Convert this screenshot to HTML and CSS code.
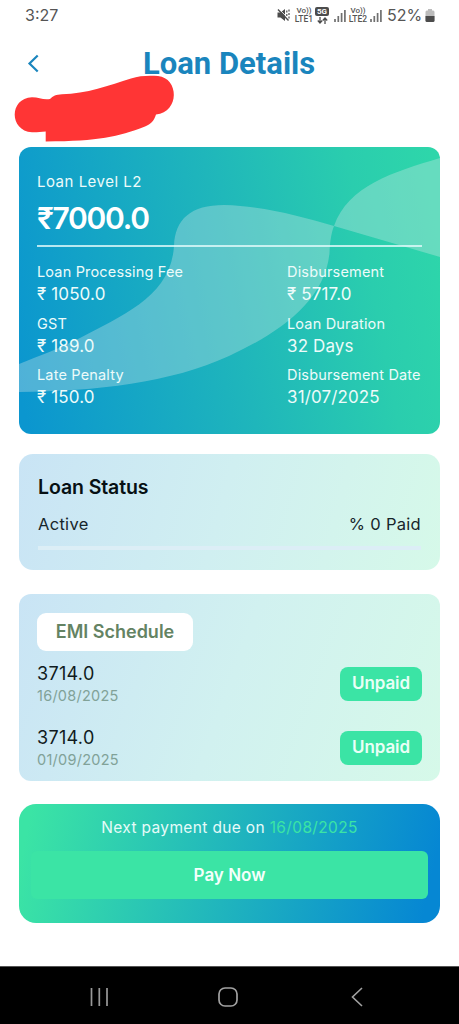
FILE: index.html
```html
<!DOCTYPE html>
<html lang="en">
<head>
<meta charset="utf-8">
<meta name="viewport" content="width=device-width, initial-scale=1">
<title>Loan Details</title>
<link rel="stylesheet" href="styles.css">
</head>
<body>
<div class="screen">
  <div class="statusbar">
    <span class="clock">3:27</span>
    <div class="indicators">
      <svg class="mute" width="13" height="14" viewBox="0 0 13 14"><path d="M.5 4.500h3L8 1v12L3.500 9.500h-3z" fill="#4c4c4c"/><path d="M2.200 1.300 12 11.300" stroke="#fff" stroke-width="1"/><path d="M1 1.500 11.500 12.500" stroke="#4c4c4c" stroke-width="1.400"/><path d="M9.800 2.500v2M9.800 6v2M12 1.500v2M12 5v2M12 8.500v2" stroke="#4c4c4c" stroke-width="1.200"/></svg>
      <span class="volte volte-1"><span>Vo))</span><span class="lte">LTE1</span></span>
      <span class="net"><span class="net-badge">5G</span><svg width="11" height="7" viewBox="0 0 11 7"><path d="M3 0v5.500M.8 3.500 3 6l2.200-2.500M8 7V1.300M5.800 3.500 8 1l2.200 2.500" fill="none" stroke="#4c4c4c" stroke-width="1.300"/></svg></span>
      <svg class="signal-1" width="12" height="13" viewBox="0 0 12 13"><path d="M1 10v3M4.300 7v6M7.600 4v9M10.900 1v12" stroke="#707070" stroke-width="1.700"/></svg>
      <span class="volte volte-2"><span>Vo))</span><span class="lte">LTE2</span></span>
      <svg class="signal-2" width="12" height="13" viewBox="0 0 12 13"><path d="M1 10v3M4.300 7v6M7.600 4v9M10.900 1v12" stroke="#707070" stroke-width="1.700"/></svg>
      <span class="percent">52%</span>
      <svg class="battery" width="10" height="13" viewBox="0 0 10 13"><path d="M3 0h4v1.500h1.200Q9.500 1.500 9.500 3v8.500Q9.500 13 8 13H2Q.5 13 .5 11.500V3Q.5 1.500 1.800 1.500H3z" fill="#bcbcbc"/><path d="M.5 7h9v4.500Q9.500 13 8 13H2Q.5 13 .5 11.500z" fill="#4c4c4c"/></svg>
    </div>
  </div>

  <header class="header">
    <svg class="back" width="12" height="19" viewBox="0 0 12 19"><path d="M10.700 1.500 2.500 9.500l8.200 8" fill="none" stroke="#1a85bd" stroke-width="2.200"/></svg>
    <h1 class="title">Loan Details</h1>
    <svg class="scribble" width="180" height="70" viewBox="0 75 180 70"><path d="M45.700 141.500V131.500C41 131.600 37 132.500 32 132.300 9 131 9 98 32 97.300 39 97.500 43 100 50 99 53 96 56 94.500 62 94.300 86 94 110 85 131 78.500 140 75.500 149 75.500 158 76 179 78 180 112 156 114.500 154 121 151 124 145 126.500 117 137 100 141 45.700 141.500z" fill="#ff3535"/></svg>
  </header>

  <main class="content">
    <section class="card loan">
      <svg class="waves" width="421" height="287" viewBox="0 0 421 287"><path d="M0 217C22 208 42 201 61 191 104 168 152 149 155 99 156 72 172 58 205 58 245 59 281 69 315 79 312 87 311 95 310.500 106 306 155 258 187 210 209 151 236 78 244 0 245zM315 79C329 39 374 25 421 11V110z" fill="#dceaeb" fill-opacity=".33"/></svg>
      <div class="level">Loan Level L2</div>
      <div class="amount">₹7000.0</div>
      <div class="facts">
        <div class="fact-col">
          <div class="fact"><span class="label">Loan Processing Fee</span><span class="value">₹ 1050.0</span></div>
          <div class="fact"><span class="label">GST</span><span class="value">₹ 189.0</span></div>
          <div class="fact"><span class="label">Late Penalty</span><span class="value">₹ 150.0</span></div>
        </div>
        <div class="fact-col right">
          <div class="fact"><span class="label">Disbursement</span><span class="value">₹ 5717.0</span></div>
          <div class="fact"><span class="label">Loan Duration</span><span class="value">32 Days</span></div>
          <div class="fact"><span class="label">Disbursement Date</span><span class="value">31/07/2025</span></div>
        </div>
      </div>
    </section>

    <section class="card status">
      <h2 class="status-title">Loan Status</h2>
      <div class="status-row"><span>Active</span><span>% 0 Paid</span></div>
      <div class="progress"></div>
    </section>

    <section class="card schedule">
      <h2 class="schedule-title">EMI Schedule</h2>
      <div class="emi"><div class="emi-info"><span class="emi-amount">3714.0</span><span class="emi-date">16/08/2025</span></div><span class="badge">Unpaid</span></div>
      <div class="emi"><div class="emi-info"><span class="emi-amount">3714.0</span><span class="emi-date">01/09/2025</span></div><span class="badge">Unpaid</span></div>
    </section>

    <section class="card pay">
      <p class="due">Next payment due on <span class="due-date">16/08/2025</span></p>
      <button class="pay-button">Pay Now</button>
    </section>
  </main>

  <nav class="navbar">
    <svg width="18" height="20" viewBox="0 0 18 20"><path d="M1.500 1v18M9.300 1v18M17 1v18" stroke="#999" stroke-width="1.700"/></svg>
    <svg class="home" width="20" height="20" viewBox="0 0 20 20"><rect x="1" y="1" width="18" height="18" rx="6" fill="none" stroke="#a2a2a2" stroke-width="1.700"/></svg>
    <svg width="12" height="20" viewBox="0 0 12 20"><path d="M11 1 1.500 10l9.500 9" fill="none" stroke="#a2a2a2" stroke-width="1.600"/></svg>
  </nav>
</div>
</body>
</html>
```
FILE: styles.css
```css
* { box-sizing: border-box; }
body { margin: 0; background: #fff; font-family: Inter, "Liberation Sans", sans-serif; }
h1, h2, p { margin: 0; }
svg { display: block; flex: none; }

.screen { width: 459px; height: 1024px; display: flex; flex-direction: column; overflow: hidden; }

.statusbar { height: 30px; padding: 0 24px 0 25px; display: flex; justify-content: space-between; align-items: center; color: #555; font-size: 16px; }
.clock { letter-spacing: 0; }
.indicators { display: flex; align-items: center; }
.volte { display: flex; flex-direction: column; align-items: center; width: 18px; font: 500 8px/8px Roboto, sans-serif; color: #555; }
.lte { font-size: 8.500px; }
.volte-1 { margin-left: 5px; }
.volte-2 { margin-left: 3px; }
.net { display: flex; flex-direction: column; align-items: center; gap: 1px; margin-left: 2px; }
.net-badge { width: 14px; height: 9px; border-radius: 2px; background: #4c4c4c; color: #fff; font: 700 8px/9px Roboto, sans-serif; text-align: center; }
.signal-1 { margin-left: 5px; }
.signal-2 { margin-left: 3px; }
.percent { margin-left: 5px; width: 37px; }
.battery { margin-left: 1px; }

.header { position: relative; height: 117px; padding: 14px 0 0 27px; display: flex; align-items: flex-start; }
.back { margin-top: 10px; }
.title { margin: 1px 0 0 104px; font: 700 31px/38px Roboto, sans-serif; color: #1a85bd; white-space: nowrap; }
.scribble { position: absolute; left: 0; top: 45px; }

.content { flex: 1; padding: 0 19px; }
.card { width: 421px; }

.loan { position: relative; height: 287px; padding: 24px 18px 0; border-radius: 12px; overflow: hidden; color: #edfbfa; background: linear-gradient(79deg, #0b96cf 2%, #1fb6bb 50%, #2acdae 80%, #2ed6aa 98%); }
.waves { position: absolute; left: 0; top: 0; }
.level, .amount, .facts { position: relative; }
.level { font-size: 15px; line-height: 22px; letter-spacing: .5px; }
.amount { height: 54px; padding-top: 7px; border-bottom: 2px solid rgba(225, 250, 250, .8); font-size: 30px; line-height: 36px; font-weight: 600; letter-spacing: -1.300px; color: #fff; }
.facts { display: flex; justify-content: space-between; padding-top: 14px; }
.fact-col { display: flex; flex-direction: column; gap: 7.500px; }
.fact-col.right { width: 135px; }
.fact { display: flex; flex-direction: column; white-space: nowrap; }
.label { font-size: 14.500px; line-height: 22px; letter-spacing: .17px; }
.value { font-size: 17px; line-height: 22px; letter-spacing: .13px; }

.status { height: 116px; margin-top: 20px; padding: 20px 19px 0; border-radius: 14px; background: linear-gradient(105deg, #c9e4f5, #d0eff1 48%, #d6f9e9); color: #17252a; }
.status-title { font-size: 19.500px; line-height: 26px; font-weight: 600; letter-spacing: -.100px; color: #071014; }
.status-row { display: flex; justify-content: space-between; margin-top: 12px; font-size: 16.500px; line-height: 24px; letter-spacing: .300px; }
.progress { height: 4px; margin-top: 10px; background: #dceef6; }

.schedule { height: 187px; margin-top: 24px; padding: 19px 18px 0; border-radius: 12px; background: linear-gradient(110deg, #c9e4f5, #d1f1f0 50%, #d6f9e9); }
.schedule-title { width: 156px; height: 38px; border-radius: 9px; background: #fff; color: #648363; font-size: 18px; line-height: 38px; font-weight: 600; text-align: center; }
.emi { display: flex; justify-content: space-between; align-items: center; height: 44px; margin-top: 11px; }
.emi + .emi { margin-top: 20px; }
.emi-info { display: flex; flex-direction: column; }
.emi-amount { font-size: 18px; line-height: 24px; letter-spacing: .300px; color: #101b20; }
.emi-date { font-size: 14.500px; line-height: 20px; letter-spacing: .250px; color: #81a298; }
.badge { width: 82px; height: 34px; border-radius: 8px; background: #3be4a5; color: #e9fff6; font-size: 17px; line-height: 33px; font-weight: 600; letter-spacing: -.100px; text-align: center; }

.pay { height: 119px; margin-top: 23px; padding: 12px 12px 0; border-radius: 17px; background: linear-gradient(102deg, #3be4a5 3%, #20b5bd 50%, #0687d3 96%); }
.due { color: #e6fbf9; font-size: 15.500px; line-height: 24px; letter-spacing: .350px; text-align: center; }
.due-date { color: #3be4a5; }
.pay-button { display: block; width: 100%; height: 48px; margin-top: 11px; padding: 0; border: 0; border-radius: 6px; background: #3be4a5; color: #f4fffb; font: 600 17px/48px Inter, sans-serif; }

.navbar { height: 58px; padding: 3px 96px 0 90px; display: flex; justify-content: space-between; align-items: center; background: #000; border-top: 1px solid #555; }
.home { margin-right: 3px; }
```
